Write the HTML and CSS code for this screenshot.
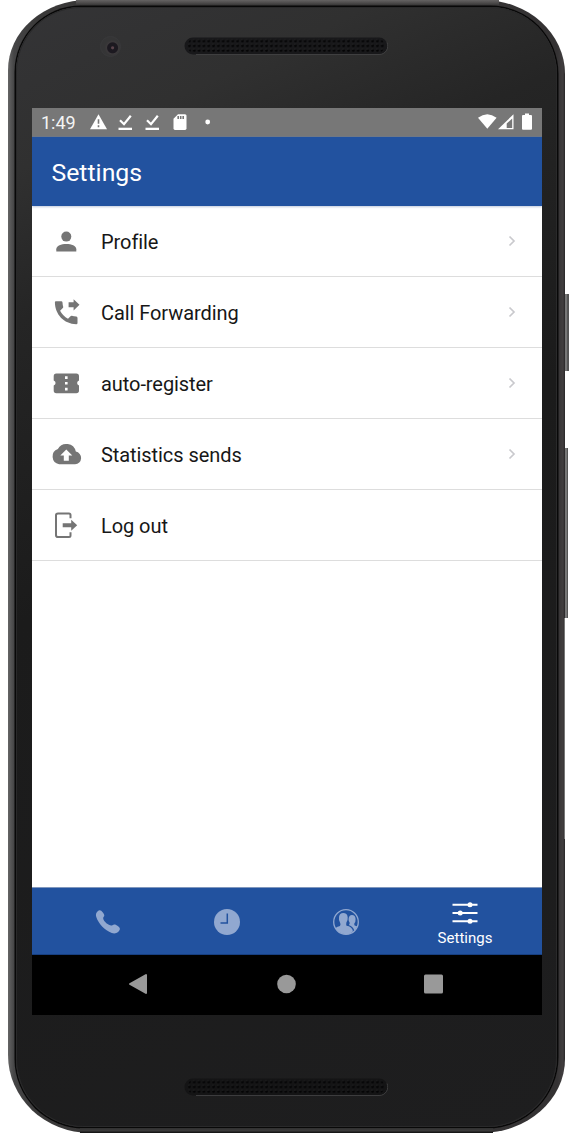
FILE: index.html
```
<!DOCTYPE html>
<html lang="en">
<head>
<meta charset="utf-8">
<title>Settings</title>
<link rel="stylesheet" href="styles.css">
</head>
<body>
<div class="phone">
  <div class="face">
    <div class="bezel-top">
      <span class="camera"></span>
      <svg class="speaker" width="204" height="18" viewBox="0 0 204 18">
        <defs><pattern id="mesh" x="3" y="1.6" width="4.82" height="4.8" patternUnits="userSpaceOnUse"><circle cx="2.4" cy="2.4" r="1.3" fill="#020203"/><path d="M1.2 1.1h1.5" stroke="#343434" stroke-width=".5"/></pattern></defs>
        <rect x=".5" y=".5" width="203" height="17" rx="8.5" fill="#18181a"/>
        <rect x="4" y="1.6" width="196" height="14.4" rx="6" fill="url(#mesh)"/>
        <path d="M12 17.5h183a8.5 8.5 0 0 0 8-12" fill="none" stroke="#464647" stroke-width=".8"/>
      </svg>
    </div>
    <main class="screen">
      <div class="status">
        <span class="time">1:49</span>
        <svg class="notices" width="125" height="20" viewBox="0 0 125 20">
          <g fill="#fff"><path d="M8.500 2.300 17 17.300H0Z"/><path d="M28.500 15.700h13.500v2.300H28.500z"/><path d="M55.500 15.700h13.500v2.300H55.500z"/><path d="M88 2.300h7q1.500 0 1.500 1.500v12.500q0 1.600-1.500 1.600H85q-1.500 0-1.500-1.600V6.800Z"/><circle cx="117.700" cy="10" r="2.400"/></g>
          <path d="M8.500 7.300v4.500M8.500 13.300v2M88.200 4v3M90.700 4v3M93.200 4v3" stroke="#777" stroke-width="1.600"/>
          <path d="m30 8.200 4 4 6.800-8.500M57 8.200l4 4 6.800-8.500" fill="none" stroke="#fff" stroke-width="2.200"/>
        </svg>
        <svg class="signals" width="56" height="20" viewBox="0 0 56 20">
          <path d="M0 5.800Q9.300-1.200 18.600 5.800L9.300 16.800Z" fill="#fff"/>
          <path d="M35.500 2.300v15H20Z" fill="#fff"/><path d="M34.200 6.500v9.600h-5.500v-4.500Z" fill="#777"/>
          <path d="M47 1.600h4v1.500h2q1 0 1 1v12.700q0 1-1 1h-8q-1 0-1-1V4.100q0-1 1-1h2Z" fill="#fff"/>
        </svg>
      </div>
      <header class="header"><h1>Settings</h1></header>
      <ul class="menu">
        <li><svg class="icon" viewBox="0 0 32 32"><circle cx="16.300" cy="11.600" r="5" fill="#757575"/><path d="M6.300 26.500v-2.200c0-7 20-7 20 0v2.200Z" fill="#757575"/></svg><span>Profile</span><svg class="chevron" viewBox="0 0 8 12"><path d="m1.500 1.500 4.500 4.500-4.500 4.500"/></svg></li>
        <li><svg class="icon" viewBox="0 0 32 32"><path d="M5.900 5.200h5.300q1.200 0 1.300 1.200.1 2.400.7 4.300.2.800-.4 1.400l-2.700 2.700q2.700 5.200 7.900 7.900l2.500-2.500q.6-.6 1.400-.4 2 .7 4.400.8 1.200.1 1.200 1.300V27q0 1.200-1.200 1.200C13.800 28 5 18.300 4.900 6.300q0-1.100 1-1.100Z" fill="#757575"/><path d="M18.600 6.300h5V3.200l5.900 5.600-5.900 5.600v-3.200h-5Z" fill="#757575"/></svg><span>Call Forwarding</span><svg class="chevron" viewBox="0 0 8 12"><path d="m1.500 1.500 4.500 4.500-4.500 4.500"/></svg></li>
        <li><svg class="icon" viewBox="0 0 32 32"><path d="M6.300 6.500h20q2.700 0 2.700 2.700v4.300a2.600 2.600 0 0 0 0 5v5q0 2.700-2.700 2.700h-20q-2.600 0-2.600-2.700v-5a2.600 2.600 0 0 0 0-5V9.200q0-2.700 2.600-2.700Z" fill="#757575"/><path d="M15 9.300h2.600v2.600H15zM15 15h2.600v2.600H15zM15 20.800h2.600v2.600H15z" fill="#fff"/></svg><span>auto-register</span><svg class="chevron" viewBox="0 0 8 12"><path d="m1.500 1.500 4.500 4.500-4.500 4.500"/></svg></li>
        <li><svg class="icon" viewBox="0 0 32 32"><path d="M25.800 13.600A9.700 9.700 0 0 0 7.900 10.900 8 8 0 0 0 9.100 26.300h16a6.400 6.400 0 0 0 .7-12.700Z" fill="#757575"/><path d="m16.300 11.500 6 6h-3.500v5.300h-5v-5.300h-3.500Z" fill="#fff"/></svg><span>Statistics sends</span><svg class="chevron" viewBox="0 0 8 12"><path d="m1.500 1.500 4.500 4.500-4.500 4.500"/></svg></li>
        <li><svg class="icon" viewBox="0 0 32 32"><path d="M20.500 9.300V6q0-1.500-1.500-1.500H8Q6 4.500 6 6.300v19.900Q6 28 8 28h11q1.500 0 1.500-1.500v-3.300" fill="none" stroke="#757575" stroke-width="2"/><path d="M12.700 14.200h8.500v-3.400l6 5.500-6 5.500v-3.600h-8.500Z" fill="#757575"/></svg><span>Log out</span></li>
      </ul>
      <nav class="tabs">
        <svg width="28" height="28" viewBox="0 0 28 28"><path d="M5.500 2.300c1.700-.6 4.600 3.200 4.800 5 .1 1.400-1.300 1.800-1.100 3.200.5 3.200 5.300 6.900 8 7 1.600 0 2-1.500 3.800-.9 1.900.6 5 2.800 4.900 4.400-.4 2.500-3.600 5.500-8.100 4C10.700 22.500 4.300 15.300 2.300 9 1.100 5.300 3.500 2.900 5.500 2.300Z" fill="#91a8d0"/></svg>
        <svg width="28" height="28" viewBox="0 0 28 28"><circle cx="14" cy="14" r="13" fill="#91a8d0"/><path d="M14.300 5.500v9.400H7.500" fill="none" stroke="#22529f" stroke-width="1.500"/></svg>
        <svg width="28" height="28" viewBox="0 0 28 28"><circle cx="14" cy="14" r="12.300" fill="none" stroke="#91a8d0" stroke-width="1.300"/><path d="M3.300 20.500q.9-2 4.700-2.600 1-2 .1-3.200Q6.500 12.400 7 9q.6-4 4.200-4 4 0 4.500 4.200.3 3-1.300 5.300-.5 1.700.1 3.200 5.400.7 6.500 5.500-3 3.300-7.200 3-6.500-.4-10.500-5.700Z" fill="#91a8d0"/><path d="M16.600 11q.3-3.900 3.400-3.900 3.300 0 3.600 3.800.1 2.900-1.300 4.600-.1 1.300.3 2 1.800.3 2.700 1.100-1 2.200-3 3.900-1.100-4-5.400-5.600 1.100-1 .7-2.300-1.100-1.400-1-3.600Z" fill="#91a8d0"/></svg>
        <div class="current"><svg width="26" height="22" viewBox="0 0 26 22"><path d="M.5 2.800h25M.5 11h25M.5 19.200h25" stroke="#fff" stroke-width="2"/><g fill="#fff"><circle cx="18" cy="2.800" r="2.500"/><circle cx="8.200" cy="11" r="2.500"/><circle cx="18" cy="19.200" r="2.500"/></g></svg><span>Settings</span></div>
      </nav>
      <div class="system">
        <svg width="22" height="22" viewBox="0 0 22 22"><path d="M19 2v18L3 11Z" fill="#999" stroke="#999" stroke-width="2" stroke-linejoin="round"/></svg>
        <svg width="22" height="22" viewBox="0 0 22 22"><circle cx="11.500" cy="11" r="9.300" fill="#999"/></svg>
        <svg width="22" height="22" viewBox="0 0 22 22"><rect x="2" y="1.500" width="19" height="19" rx="1.500" fill="#999"/></svg>
      </div>
    </main>
    <svg class="speaker low" width="204" height="18" viewBox="0 0 204 18">
      <rect x=".5" y=".5" width="203" height="17" rx="8.500" fill="#141415"/>
      <rect x="4" y="1.600" width="196" height="14.400" rx="6" fill="url(#mesh)"/>
      <path d="M12 17.500h183a8.500 8.500 0 0 0 8-12" fill="none" stroke="#464647" stroke-width=".8"/>
    </svg>
  </div>
  <span class="key power"></span>
  <span class="key volume"></span>
  <span class="key edge"></span>
</div>
</body>
</html>
```
FILE: styles.css
```
* { box-sizing: border-box; }
body { margin: 0; height: 1138px; overflow: hidden; background: #fff; font-family: Roboto, sans-serif; }
.phone { position: relative; width: 557px; height: 1133px; margin-left: 8px; padding: 7px 8px 6px; border-radius: 80px 82px 84px 82px / 70px 74px 74px 78px; background: linear-gradient(90deg, #656565 0, #454546 6px, #3a3939 30px, #343233 549px, #413e3f 555px, #282627 557px); }
.phone::before { content: ""; position: absolute; left: 68px; right: 66px; top: 0; height: 5px; background: linear-gradient(#656363, #4c4a4a 3px, #393838); }
.phone::after { content: ""; position: absolute; left: 72px; right: 72px; bottom: 0; height: 5px; background: linear-gradient(#303030, #3d3c3c 3px, #171717 4px); }
.face { width: 541px; height: 1120px; padding-left: 16px; border-radius: 65px 67px 70px 68px; background: linear-gradient(155deg, #343436 0, #303030 12%, #252525 23%, #1b1b1b 45%, #1e1e1f 100%); box-shadow: 0 0 0 1.500px #080808, inset 0 0 0 1px #29292a; }
.bezel-top { height: 101px; display: flex; align-items: flex-start; padding: 30px 0 0 68px; }
.camera { width: 21px; height: 21px; margin: -1px 63px 0 0; border-radius: 50%; border: 1px solid #39393b; background: radial-gradient(circle at 61% 57%, #5a434b 0 1px, #1c1920 2px 5px, #3c393b 6px, #353536 8px); }
.speaker { display: block; flex: none; }
.low { margin: 63px 0 0 152px; }
.screen { width: 510px; height: 907px; display: flex; flex-direction: column; overflow: hidden; background: #fff; }
.status { height: 29px; display: flex; align-items: center; padding: 0 8px 0 9px; background: #777; border-bottom: 1px solid #69727f; color: #fff; }
.time { width: 48.500px; padding-top: 1px; font-size: 18px; line-height: 28px; color: #f4f4f4; }
.notices { flex: none; }
.signals { margin-left: auto; }
.header { height: 69px; display: flex; align-items: center; padding: 3px 0 0 19.500px; background: #22529f; color: #fff; box-shadow: 0 1px 2px #c0cbdc; z-index: 1; }
h1 { margin: 0; font-size: 24.800px; font-weight: 400; line-height: 30px; }
.menu { flex: 1; margin: 0; padding: 0; list-style: none; }
.menu li { height: 71px; display: flex; align-items: center; padding: 0 26px 0 18px; border-bottom: 1px solid #ddd; font-size: 20px; line-height: 24px; letter-spacing: -.07px; color: #171717; }
.icon { width: 32px; height: 32px; margin: -1px 19px 0 0; }
.menu span { padding-top: 2px; }
.chevron { width: 8px; height: 12px; margin: -1px 0 0 auto; }
.chevron path { fill: none; stroke: #c9c9cd; stroke-width: 1.700; }
.tabs { height: 68px; display: grid; grid-template-columns: repeat(4, 119px); padding-left: 16.500px; align-items: center; justify-items: center; background: #22529f; border-bottom: 1px solid #173f80; border-top: 1px solid #8097bd; }
.tabs > svg { margin-top: 1px; }
.current { display: flex; flex-direction: column; align-items: center; gap: 4px; padding-top: 7px; color: #fff; font-size: 15px; line-height: 20px; }
.system { height: 60px; display: flex; align-items: center; padding: 0 98px 2px 95px; justify-content: space-between; background: #000; }
.key { position: absolute; left: 557px; background: linear-gradient(90deg, #777, #777 2px, #555 2px); }
.power { top: 294px; width: 4px; height: 77px; }
.volume { top: 448px; width: 3px; height: 170px; }
.edge { top: 618px; left: 556px; width: 1px; height: 221px; }
```
